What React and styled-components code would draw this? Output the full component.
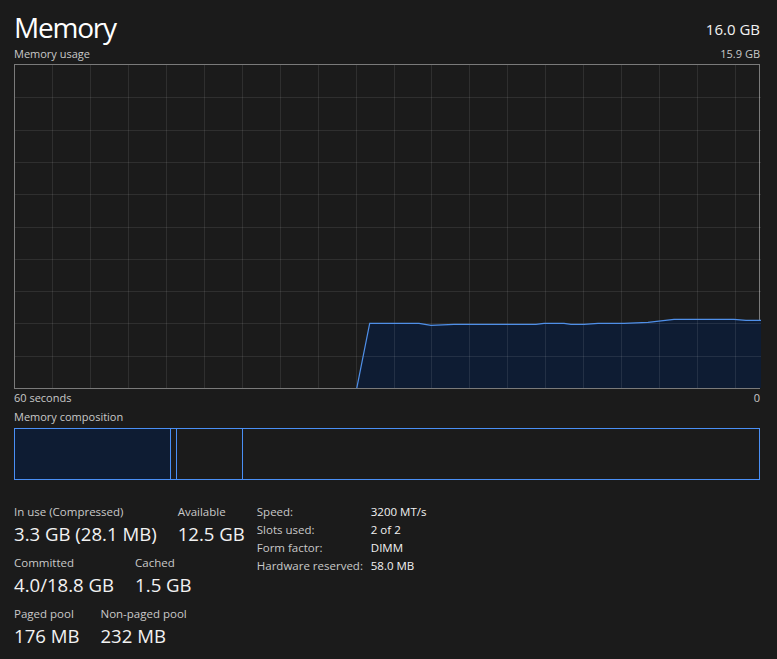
import React from 'react';
import styled, { createGlobalStyle } from 'styled-components';

const GlobalStyle = createGlobalStyle`
    html, body {
        margin: 0;
        padding: 0;
        background: #1b1b1b;
    }
    body {
        font-family: "Open Sans", "Noto Sans", sans-serif;
        color: #f2f2f2;
    }
`

const Page = styled.div`
    width: 746px;
    padding: 3px 17px 0 14px;
    height: 656px;
    overflow: hidden;
`

const Header = styled.div`
    display: flex;
    justify-content: space-between;
    align-items: flex-end;
    height: 44px;
`

const Title = styled.h1`
    margin: 0;
    font-size: 28px;
    font-weight: 400;
    letter-spacing: -1.2px;
    line-height: 40px;
    color: #ffffff;
`

const Total = styled.span`
    font-size: 15px;
    line-height: 22px;
    margin-bottom: 7px;
    color: #f2f2f2;
`

const Caption = styled.div`
    display: flex;
    justify-content: space-between;
    font-size: 11px;
    line-height: 14px;
    margin-top: ${(p) => p.$gap || 0}px;
    color: #c9c9c9;
`

const Chart = styled.div`
    height: 323px;
    border: 1px solid #7a7a7a;
    margin-top: 3px;
    svg {
        display: block;
    }
`

const Composition = styled.div`
    display: flex;
    height: 50px;
    border: 1px solid #4a8ff5;
    margin-top: 4px;
`

const Segment = styled.div`
    flex: ${(p) => (p.$grow ? 1 : 'none')};
    background: ${(p) => (p.$filled ? '#0e1c33' : 'transparent')};
    border-right: ${(p) => (p.$last ? 'none' : '1px solid #4a8ff5')};
`

const Stats = styled.div`
    display: flex;
    gap: 12px;
    margin-top: 24px;
`

const Block = styled.div`
    display: flex;
    flex-direction: column;
    gap: 7px;
`

const Row = styled.div`
    display: flex;
    gap: 21px;
`

const Item = styled.div`
    display: flex;
    flex-direction: column;
`

const Label = styled.span`
    font-size: 11.5px;
    line-height: 16px;
    color: #c9c9c9;
`

const Value = styled.span`
    font-size: 18.6px;
    line-height: 28px;
    color: #f2f2f2;
`

const Table = styled.div`
    display: grid;
    grid-template-columns: 114px auto;
    grid-auto-rows: 18px;
    font-size: 11.5px;
    line-height: 18px;
    margin-top: -1px;
`

const Key = styled.span`
    color: #c9c9c9;
`

const Val = styled.span`
    color: #f2f2f2;
`

const W = 746;
const H = 323;

const points = [
    [341.7, 323.5], [354.7, 258.3], [404, 258.3], [416, 260.3], [439, 259.3],
    [521, 259.3], [529, 258.3], [549, 258.3], [556, 259.3], [569, 259.3],
    [583, 258.3], [609, 258.3], [633, 257.3], [659, 254.3], [719, 254.3],
    [731, 255.3], [746, 255.3],
];

const composition = [
    { width: 155, filled: true },
    { width: 5 },
    { width: 65 },
    { grow: true, last: true },
];

const stats = [
    [
        { label: 'In use (Compressed)', value: '3.3 GB (28.1 MB)' },
        { label: 'Available', value: '12.5 GB' },
    ],
    [
        { label: 'Committed', value: '4.0/18.8 GB' },
        { label: 'Cached', value: '1.5 GB' },
    ],
    [
        { label: 'Paged pool', value: '176 MB' },
        { label: 'Non-paged pool', value: '232 MB' },
    ],
];

const details = [
    ['Speed:', '3200 MT/s'],
    ['Slots used:', '2 of 2'],
    ['Form factor:', 'DIMM'],
    ['Hardware reserved:', '58.0 MB'],
];

const UsageGraph = () => {
    const cols = [];
    for (let x = 38; x < W; x += 37.95) cols.push(Math.round(x) - 0.5);
    const rows = [];
    for (let i = 1; i < 10; i++) rows.push(Math.round((H / 10) * i) + 0.5);
    const line = points.map((p) => p.join(',')).join(' ');
    const area = `${line} ${W},${H} ${points[0][0]},${H}`;

    return (
        <svg width={W} height={H} viewBox={`0 0 ${W} ${H}`}>
            <polygon points={area} fill="#0e1c33" />
            {cols.map((x) => (
                <line key={'c' + x} x1={x} y1={0} x2={x} y2={H} stroke="rgba(255,255,255,0.09)" />
            ))}
            {rows.map((y) => (
                <line key={'r' + y} x1={0} y1={y} x2={W} y2={y} stroke="rgba(255,255,255,0.09)" />
            ))}
            <polyline points={line} fill="none" stroke="#4f8fe8" strokeWidth="1.2" />
        </svg>
    );
};

const App = () => {
    return (
        <>
            <GlobalStyle />
            <Page>
                <Header>
                    <Title>Memory</Title>
                    <Total>16.0 GB</Total>
                </Header>
                <Caption>
                    <span>Memory usage</span>
                    <span>15.9 GB</span>
                </Caption>
                <Chart>
                    <UsageGraph />
                </Chart>
                <Caption $gap={2}>
                    <span>60 seconds</span>
                    <span>0</span>
                </Caption>
                <Caption $gap={5}>
                    <span>Memory composition</span>
                </Caption>
                <Composition>
                    {composition.map((seg, index) => (
                        <Segment
                            key={index}
                            style={seg.width ? { width: seg.width } : undefined}
                            $filled={seg.filled}
                            $grow={seg.grow}
                            $last={seg.last}
                        />
                    ))}
                </Composition>
                <Stats>
                    <Block>
                        {stats.map((row, index) => (
                            <Row key={index}>
                                {row.map((item) => (
                                    <Item key={item.label}>
                                        <Label>{item.label}</Label>
                                        <Value>{item.value}</Value>
                                    </Item>
                                ))}
                            </Row>
                        ))}
                    </Block>
                    <Table>
                        {details.map(([k, v]) => (
                            <React.Fragment key={k}>
                                <Key>{k}</Key>
                                <Val>{v}</Val>
                            </React.Fragment>
                        ))}
                    </Table>
                </Stats>
            </Page>
        </>
    );
};

export default App;
